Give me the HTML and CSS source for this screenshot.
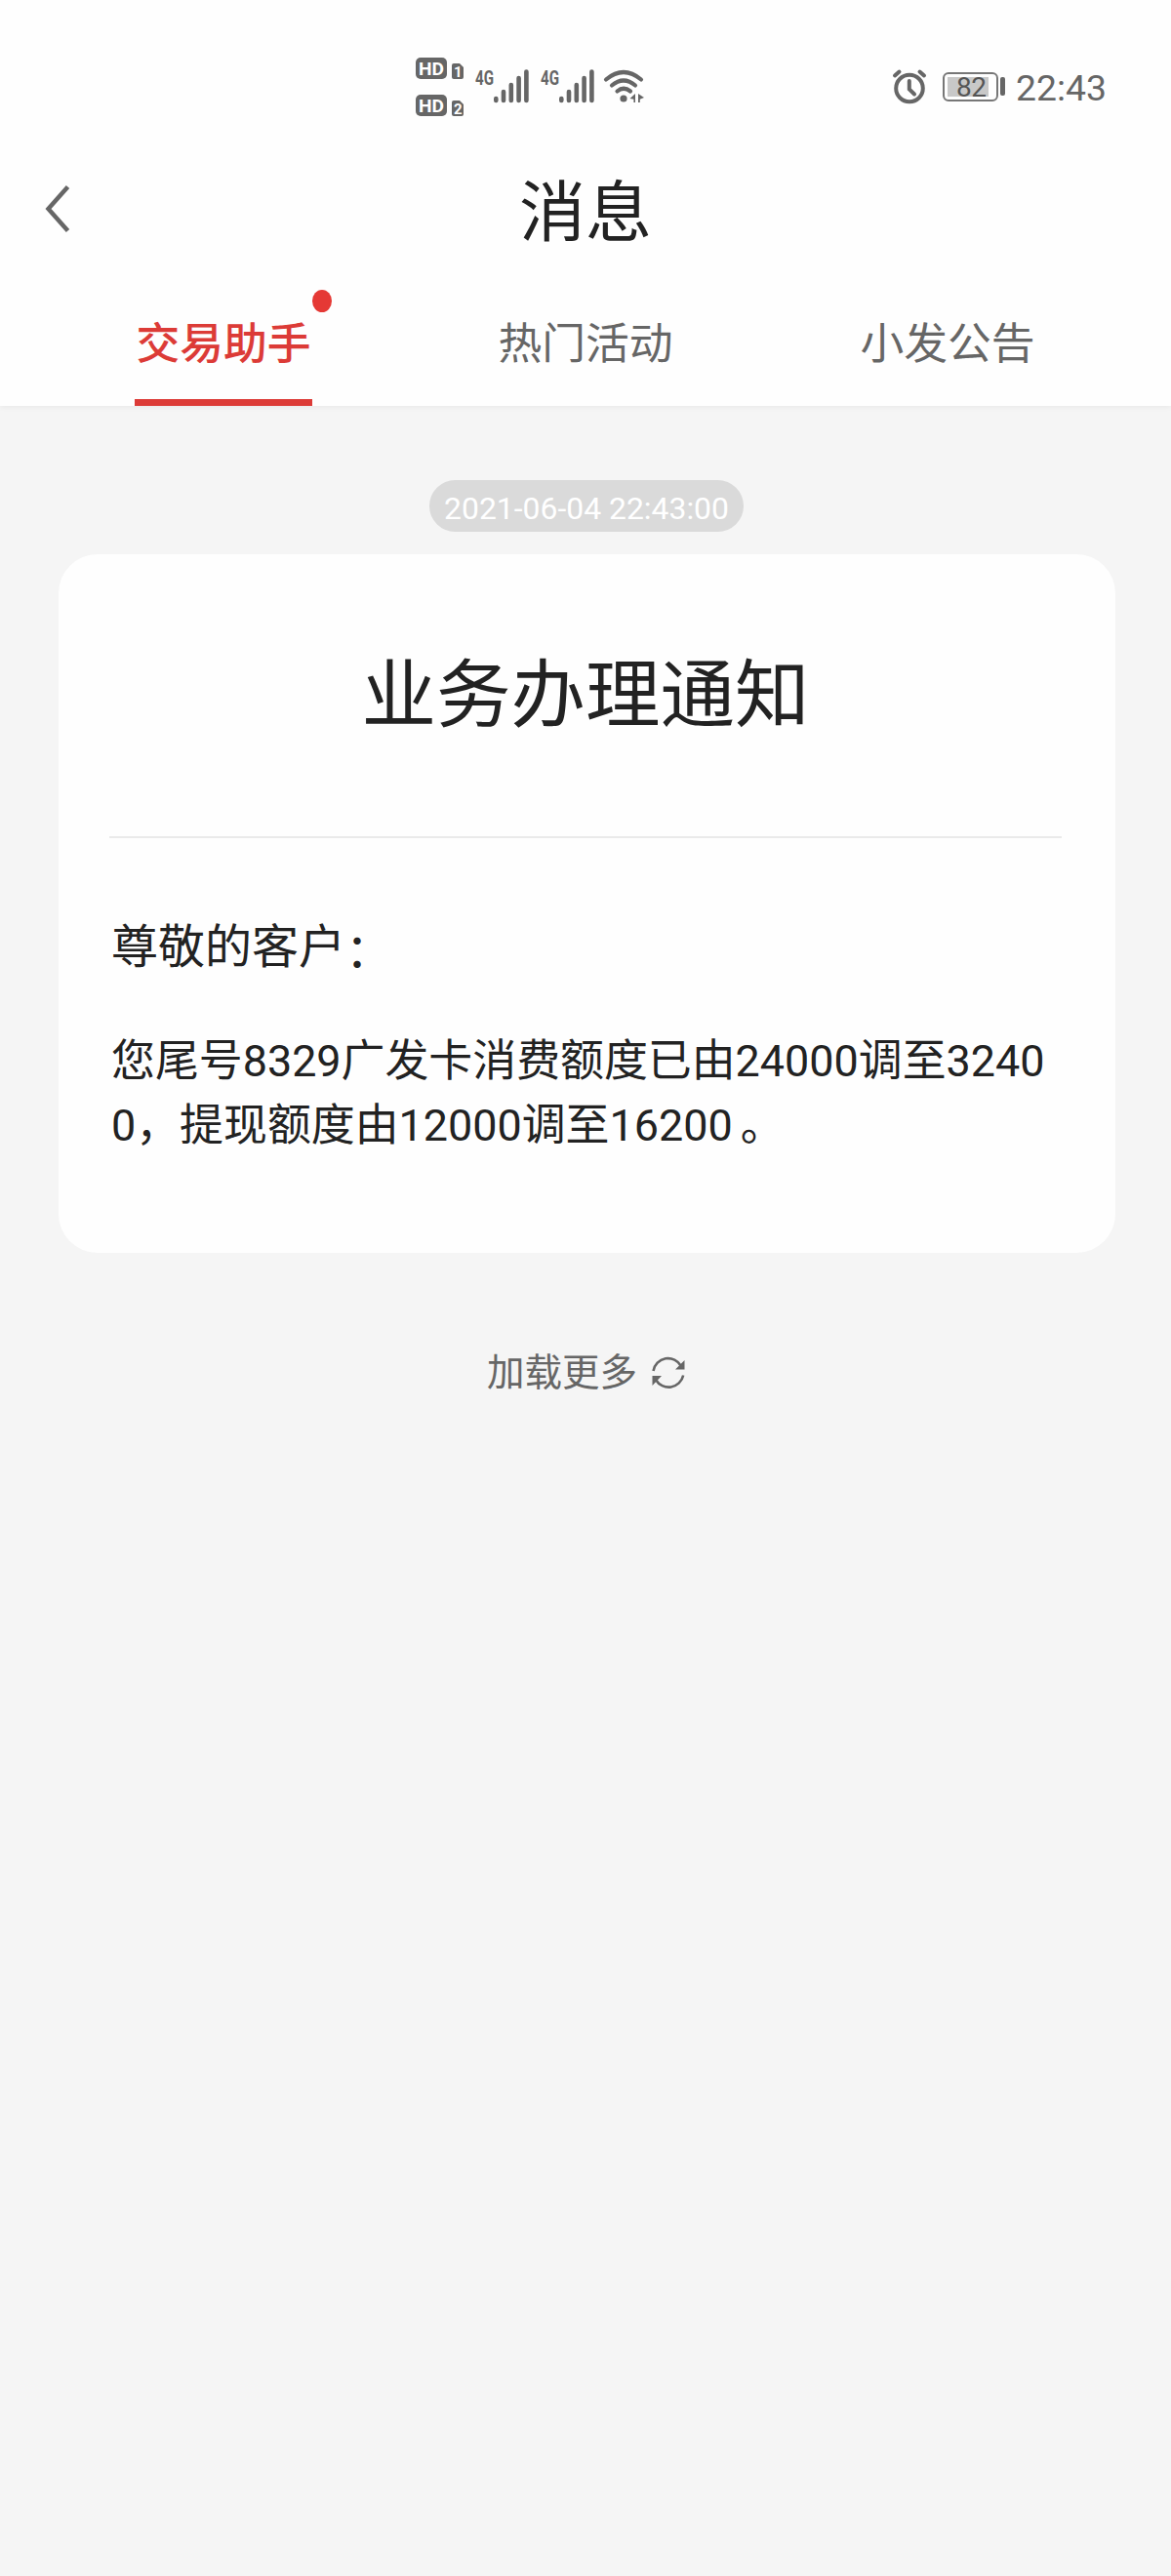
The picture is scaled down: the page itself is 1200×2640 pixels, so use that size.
FILE: index.html
```html
<!DOCTYPE html>
<html lang="zh-CN">
<head>
    <meta charset="UTF-8">
    <meta name="viewport" content="width=device-width, initial-scale=1.0">
    <title>消息</title>
    <link rel="stylesheet" href="styles.css">
</head>
<body>
    <header class="header">
        <div class="status-bar">
            <div class="status-left">
                <div class="hd-list">
                    <svg class="hd" width="50" height="24" viewBox="0 0 50 24">
                        <rect x="0" y="1" width="32" height="22" rx="5"/>
                        <text class="hd-text" x="3" y="18.5" textLength="26" lengthAdjust="spacingAndGlyphs">HD</text>
                        <path d="M39 7h6l4 4v10a2 2 0 0 1-2 2h-8a2 2 0 0 1-2-2V9a2 2 0 0 1 2-2z"/>
                        <text class="sim-text" x="39" y="20.5">1</text>
                    </svg>
                    <svg class="hd" width="50" height="24" viewBox="0 0 50 24">
                        <rect x="0" y="1" width="32" height="22" rx="5"/>
                        <text class="hd-text" x="3" y="18.5" textLength="26" lengthAdjust="spacingAndGlyphs">HD</text>
                        <path d="M39 7h6l4 4v10a2 2 0 0 1-2 2h-8a2 2 0 0 1-2-2V9a2 2 0 0 1 2-2z"/>
                        <text class="sim-text" x="39" y="20.5">2</text>
                    </svg>
                </div>
                <svg class="signal" width="56" height="40" viewBox="0 -4 56 40">
                    <text class="net-text" x="0" y="16.5" textLength="19" lengthAdjust="spacingAndGlyphs">4G</text>
                    <path d="M21.3 31v2M29 24v9M36.8 17v16M44.6 10v23M52.4 3.500v29.500"/>
                </svg>
                <svg class="signal" width="56" height="40" viewBox="0 -4 56 40">
                    <text class="net-text" x="0" y="16.5" textLength="19" lengthAdjust="spacingAndGlyphs">4G</text>
                    <path d="M21.3 31v2M29 24v9M36.8 17v16M44.6 10v23M52.4 3.500v29.500"/>
                </svg>
                <svg class="wifi" width="42" height="36" viewBox="0 0 42 36">
                    <path class="arc" d="M2 11.500Q20 -3.500 38 11.500M8 17.500Q20 7.500 32 17.500M13.500 23.500Q20 18 27 23.500"/>
                    <circle cx="20" cy="31" r="3.600"/>
                    <path d="M26.500 31l5.500-5v9h-1.600v-3.200zM35 26l6 4-4.200 1.800V35H35z"/>
                </svg>
            </div>
            <div class="status-right">
                <svg class="alarm" width="36" height="36" viewBox="0 0 36 36">
                    <circle cx="18" cy="19.500" r="13.800"/>
                    <path d="M17.800 12v8.500l5.200 5"/>
                    <path d="M3 6.500l4.500-4M33 6.500l-4.500-4"/>
                </svg>
                <div class="battery">
                    <div class="battery-body"><div class="battery-level">82</div></div>
                    <div class="battery-cap"></div>
                </div>
                <span class="time">22:43</span>
            </div>
        </div>

        <div class="nav-bar">
            <svg class="back" width="26" height="48" viewBox="0 0 26 48">
                <path d="M23.500 1.500L3.500 24l20 22.500"/>
            </svg>
            <h1 class="nav-title">消息</h1>
        </div>

        <nav class="tabs">
            <div class="tab active"><span class="tab-label">交易助手<i class="dot"></i></span></div>
            <div class="tab"><span class="tab-label">热门活动</span></div>
            <div class="tab"><span class="tab-label">小发公告</span></div>
        </nav>
    </header>

    <main class="content">
        <div class="timestamp">2021-06-04 22:43:00</div>

        <section class="card">
            <h2 class="card-title">业务办理通知</h2>
            <div class="card-body">
                <p class="greeting">尊敬的客户<span class="colon">：</span></p>
                <p class="message">您尾号8329广发卡消费额度已由24000调至32400，提现额度由12000调至16200<span class="period">。</span></p>
            </div>
        </section>

        <div class="load-more">
            <span>加载更多</span>
            <svg class="refresh" width="36" height="36" viewBox="0 0 36 36">
                <path class="line" d="M2.500 16A15.300 15.300 0 0 1 31 11M33.200 20.500A15.300 15.300 0 0 1 5 25"/>
                <path d="M34.500 5v9.500H25zM1.500 31v-10H11z"/>
            </svg>
        </div>
    </main>
</body>
</html>
```
FILE: styles.css
```css
:root {
    --red: #dc3b37;
    --text: #222;
    --gray: #666;
    --page-bg: #f5f5f5;
}

* {
    box-sizing: border-box;
}

body {
    margin: 0;
    min-height: 2640px;
    background-color: var(--page-bg);
    color: var(--text);
    font-family: Roboto, 'Noto Sans CJK SC', sans-serif;
}

h1, h2, p {
    margin: 0;
    font-weight: 400;
}

svg {
    display: block;
    overflow: visible;
    fill: var(--gray);
}

.header {
    height: 416px;
    background-color: #fefefe;
    box-shadow: 0 1px 6px rgba(0, 0, 0, 0.06);
}

/* status bar */
.status-bar {
    display: flex;
    justify-content: space-between;
    height: 150px;
    padding: 58px 66px 0 426px;
    color: var(--gray);
}

.status-left {
    display: flex;
}

.hd-list {
    display: flex;
    flex-direction: column;
    gap: 14px;
    margin-right: 11px;
}

.hd-text {
    fill: #fff;
    font-size: 19px;
    font-weight: 700;
}

.sim-text {
    fill: #fff;
    font-size: 15px;
    font-weight: 700;
}

.signal {
    margin: 8px 11px 0 0;
}

.signal path {
    stroke: var(--gray);
    stroke-width: 4.6;
    stroke-linecap: round;
}

.net-text {
    font-size: 21px;
    font-weight: 700;
}

.wifi {
    margin: 12px 0 0 -2px;
}

.wifi .arc {
    fill: none;
    stroke: var(--gray);
    stroke-width: 4.2;
    stroke-linecap: round;
}

.status-right {
    display: flex;
    align-items: center;
    height: 61px;
}

.alarm {
    margin-right: 16px;
    fill: none;
    stroke: var(--gray);
    stroke-width: 4;
    stroke-linecap: round;
}

.battery {
    display: flex;
    align-items: center;
    gap: 2px;
    margin-right: 11px;
}

.battery-body {
    width: 57px;
    height: 30px;
    padding: 3px;
    border: 2px solid #777;
    border-radius: 6px;
}

.battery-level {
    width: 42px;
    height: 20px;
    padding-left: 9px;
    background-color: #c8c8c8;
    color: #555;
    font-size: 28px;
    line-height: 21px;
    letter-spacing: -0.5px;
}

.battery-cap {
    width: 5px;
    height: 19px;
    border-radius: 2px;
    background-color: var(--gray);
}

.time {
    padding-top: 2px;
    font-size: 37.3px;
    line-height: 60px;
}

/* title row */
.nav-bar {
    display: grid;
    grid-template-columns: 100px 1fr 100px;
    align-items: center;
    height: 128px;
}

.back {
    margin-left: 46px;
    fill: none;
    stroke: var(--gray);
    stroke-width: 4.5;
}

.nav-title {
    padding-top: 10px;
    font-size: 68px;
    line-height: 118px;
    text-align: center;
}

/* tabs */
.tabs {
    display: grid;
    grid-template-columns: repeat(3, 371px);
    justify-content: center;
    height: 138px;
}

.tab {
    display: flex;
    justify-content: center;
    color: var(--gray);
    font-size: 44.8px;
    line-height: 149px;
}

.tab-label {
    position: relative;
    height: 138px;
    padding: 0 1px;
}

.tab.active .tab-label {
    border-bottom: 7px solid var(--red);
    color: var(--red);
    font-weight: 500;
}

.dot {
    position: absolute;
    top: 19px;
    right: -20px;
    width: 20px;
    height: 23px;
    border-radius: 50%;
    background-color: #e53935;
}

/* message list */
.content {
    display: flex;
    flex-direction: column;
    align-items: center;
    padding-top: 76px;
}

.timestamp {
    height: 53px;
    margin-left: 2px;
    padding: 0 15px;
    border-radius: 27px;
    background-color: #dadada;
    color: #fff;
    font-size: 31.9px;
    line-height: 58px;
}

.card {
    width: 1083px;
    height: 716px;
    margin: 23px 0 0 3px;
    padding: 0 55px 0 52px;
    border-radius: 40px;
    background-color: #fefefe;
}

.card-title {
    height: 291px;
    border-bottom: 2px solid #eaeaea;
    font-size: 76.5px;
    line-height: 291px;
    text-align: center;
}

.card-body {
    padding: 77px 0 0 2px;
}

.greeting {
    height: 70px;
    font-size: 48px;
    line-height: 70px;
}

/* the full-width colon sits low, level with the foot of the characters */
.colon {
    line-height: 1;
    vertical-align: -4px;
}

.message {
    margin-top: 49px;
    font-size: 44.9px;
    line-height: 66px;
    word-break: break-all;
}

.period {
    margin-left: 8px;
}

.load-more {
    display: flex;
    align-items: center;
    gap: 14px;
    margin: 92px 0 0 2px;
    color: var(--gray);
    font-size: 38.5px;
    line-height: 62px;
}

.refresh .line {
    fill: none;
    stroke: var(--gray);
    stroke-width: 2.6;
}
```
